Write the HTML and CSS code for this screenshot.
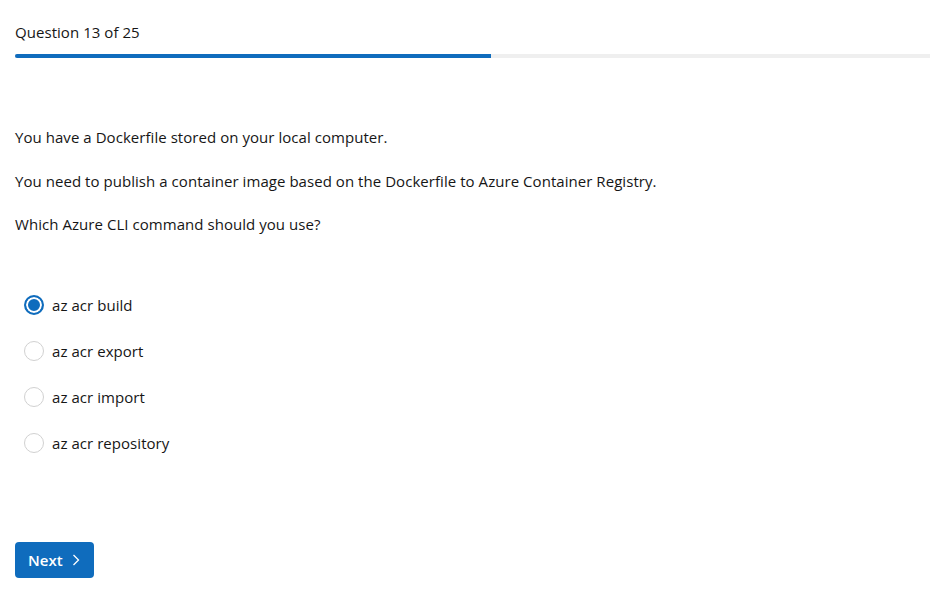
FILE: index.html
```html
<!DOCTYPE html>
<html lang="en">
<head>
<meta charset="utf-8">
<title>Question 13 of 25</title>
<link rel="stylesheet" href="styles.css">
</head>
<body>
<main class="quiz">
  <header class="quiz-header">
    <div class="counter">Question 13 of 25</div>
    <div class="progress"><div class="progress-fill" style="width:52%"></div></div>
  </header>
  <section class="question">
    <p>You have a Dockerfile stored on your local computer.</p>
    <p>You need to publish a container image based on the Dockerfile to Azure Container Registry.</p>
    <p>Which Azure CLI command should you use?</p>
  </section>
  <form class="options">
    <label class="option"><span class="radio checked"></span><span class="label">az acr build</span></label>
    <label class="option"><span class="radio"></span><span class="label">az acr export</span></label>
    <label class="option"><span class="radio"></span><span class="label">az acr import</span></label>
    <label class="option"><span class="radio"></span><span class="label">az acr repository</span></label>
  </form>
  <div class="actions">
    <button class="next" type="button">Next
      <svg width="8" height="12" viewBox="0 0 8 12"><path d="M1.5 1 L6.5 6 L1.5 11" fill="none" stroke="#fff" stroke-width="1.3"/></svg>
    </button>
  </div>
</main>
</body>
</html>
```
FILE: styles.css
```css
* { box-sizing: border-box; }
html, body { margin: 0; background: #fff; }
body {
  font-family: "Segoe UI", "Open Sans", "Noto Sans", sans-serif;
  font-size: 15px;
  color: #161616;
  letter-spacing: 0.05px;
}
.quiz { padding: 22px 1px 0 15px; }
.counter { line-height: 20px; font-size: 15px; }
.progress {
  margin-top: 12px;
  height: 4px;
  background: #efefef;
}
.progress-fill {
  height: 4px;
  background: #0f6cbd;
  border-radius: 2px 0 0 2px;
}
.question { margin-top: 68px; }
.question p { margin: 0 0 22px; line-height: 22px; }
.question p:nth-child(2) { margin-bottom: 21px; }
.options { margin-top: 60px; display: flex; flex-direction: column; gap: 26px; }
.option { display: flex; align-items: center; height: 20px; gap: 8px; padding-left: 9px; }
.radio {
  width: 20px; height: 20px; border-radius: 50%;
  border: 1px solid #d1d1d1; background: #fff;
  display: inline-block; flex: none;
}
.radio.checked {
  border: 2px solid #0f6cbd;
  box-shadow: inset 0 0 0 2px #fff;
  background: #0f6cbd;
}
.label { line-height: 20px; }
.actions { margin-top: 89px; }
.next {
  display: inline-flex; align-items: center; gap: 9px;
  height: 36px; width: 79px; padding: 0 0 0 13px;
  background: #0f6cbd; color: #fff; border: none; border-radius: 4px;
  font-family: inherit; font-size: 15px; font-weight: 600;
}
```
